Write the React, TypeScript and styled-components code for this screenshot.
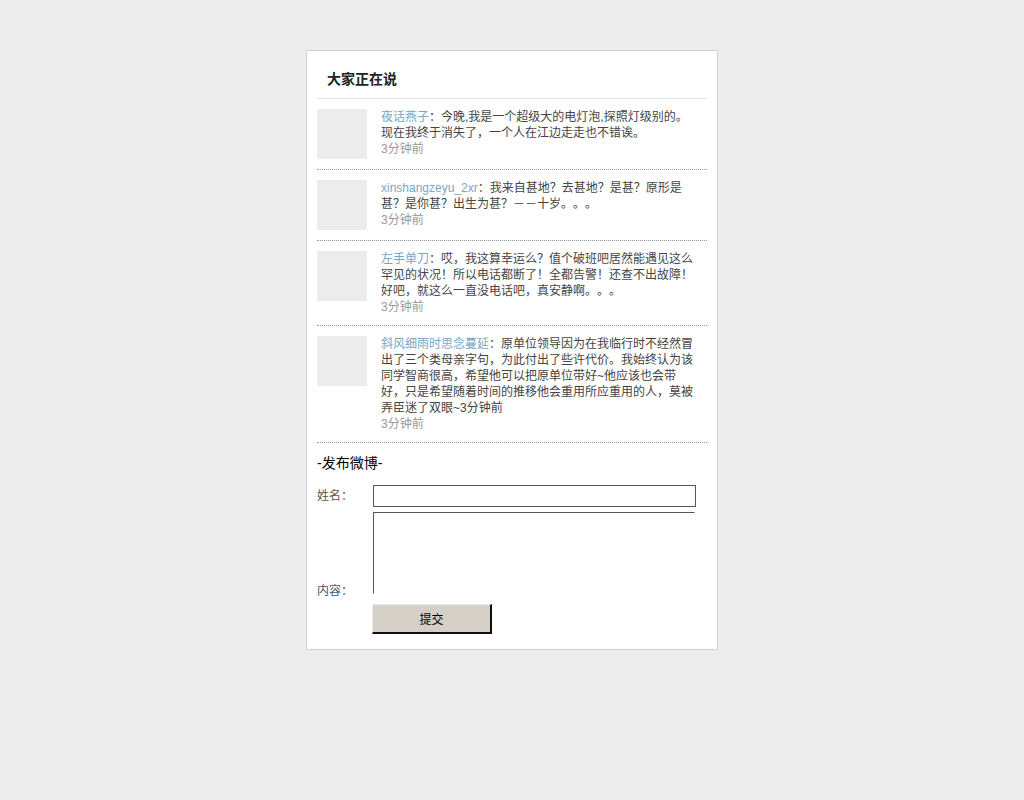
import React from 'react';
import styled, { createGlobalStyle } from 'styled-components';

const GlobalStyle = createGlobalStyle`
  html, body {
    margin: 0;
    padding: 0;
    background: #ededed;
  }
  body {
    font-family: "Liberation Sans", "Noto Sans CJK SC", sans-serif;
    font-size: 12px;
    color: #444;
    text-spacing-trim: space-all;
  }
`;

const Panel = styled.div`
  width: 412px;
  margin: 50px auto 0;
  background: #fff;
  border: 1px solid #d2d2d2;
  padding: 0 10px 15px;
  box-sizing: border-box;
`;

const Header = styled.h2`
  margin: 0;
  padding: 17px 10px 8px;
  font-size: 14px;
  line-height: 22px;
  font-weight: bold;
  color: #222;
  border-bottom: 1px solid #e6e6e6;
`;

const List = styled.ul`
  list-style: none;
  margin: 0;
  padding: 0;
`;

const Item = styled.li`
  display: flex;
  align-items: flex-start;
  padding: 10px 0;
  border-bottom: 1px dotted #999;
`;

const Avatar = styled.div`
  flex: 0 0 50px;
  height: 50px;
  background: #ececec;
  margin-right: 14px;
`;

const Body = styled.div`
  width: 315px;
  line-height: 16px;
  color: #444;
`;

const Name = styled.a`
  color: #76a8c6;
  text-decoration: none;
`;

const Time = styled.span`
  display: block;
  color: #999;
`;

const FormTitle = styled.h3`
  margin: 0;
  padding-top: 10px;
  font-size: 14px;
  line-height: 20px;
  font-weight: normal;
  color: #000;
`;

const Row = styled.div<{ $tall?: boolean }>`
  display: flex;
  align-items: ${(p) => (p.$tall ? 'flex-end' : 'center')};
  margin-top: ${(p) => (p.$tall ? '5px' : '12px')};
`;

const Label = styled.label<{ $tall?: boolean }>`
  width: 56px;
  color: #555;
  line-height: 12px;
  margin-bottom: ${(p) => (p.$tall ? '-3px' : '0')};
`;

const Input = styled.input`
  width: 323px;
  height: 22px;
  box-sizing: border-box;
  border: 1px solid #555;
  margin: 0;
  padding: 0 3px;
  font: inherit;
`;

const TextArea = styled.textarea`
  width: 322px;
  height: 82px;
  box-sizing: border-box;
  border-style: solid;
  border-width: 1px;
  border-color: #555 #fff #fff #555;
  margin: 0;
  padding: 2px;
  resize: none;
  font: inherit;
`;

const Submit = styled.button`
  display: block;
  width: 120px;
  height: 30px;
  margin: 10px 0 0 55px;
  padding: 0;
  background: #d4d0c8;
  border-style: solid;
  border-width: 1px 2px 2px 1px;
  border-color: #eeeae3 #111 #111 #eeeae3;
  font-family: "Liberation Sans", "Noto Sans CJK SC", sans-serif;
  font-size: 12px;
  color: #000;
  cursor: pointer;
`;

const posts = [
  {
    name: '夜话燕子',
    text: '今晚,我是一个超级大的电灯泡,探照灯级别的。现在我终于消失了，一个人在江边走走也不错诶。',
  },
  {
    name: 'xinshangzeyu_2xr',
    text: '我来自甚地？去甚地？是甚？原形是甚？是你甚？出生为甚？－－十岁。。。',
  },
  {
    name: '左手单刀',
    text: '哎，我这算幸运么？值个破班吧居然能遇见这么罕见的状况！所以电话都断了！全都告警！还查不出故障！好吧，就这么一直没电话吧，真安静啊。。。',
  },
  {
    name: '斜风细雨时思念蔓延',
    text: '原单位领导因为在我临行时不经然冒出了三个类母亲字句，为此付出了些许代价。我始终认为该同学智商很高，希望他可以把原单位带好~他应该也会带好，只是希望随着时间的推移他会重用所应重用的人，莫被弄臣迷了双眼~3分钟前',
  },
];

export default function App() {
  return (
    <>
      <GlobalStyle />
      <Panel>
        <Header>大家正在说</Header>
        <List>
          {posts.map((p) => (
            <Item key={p.name}>
              <Avatar />
              <Body>
                <Name href="#">{p.name}</Name>：{p.text}
                <Time>3分钟前</Time>
              </Body>
            </Item>
          ))}
        </List>
        <form onSubmit={(e) => e.preventDefault()}>
          <FormTitle>-发布微博-</FormTitle>
          <Row>
            <Label>姓名：</Label>
            <Input type="text" />
          </Row>
          <Row $tall>
            <Label $tall>内容：</Label>
            <TextArea />
          </Row>
          <Submit type="submit">提交</Submit>
        </form>
      </Panel>
    </>
  );
}
